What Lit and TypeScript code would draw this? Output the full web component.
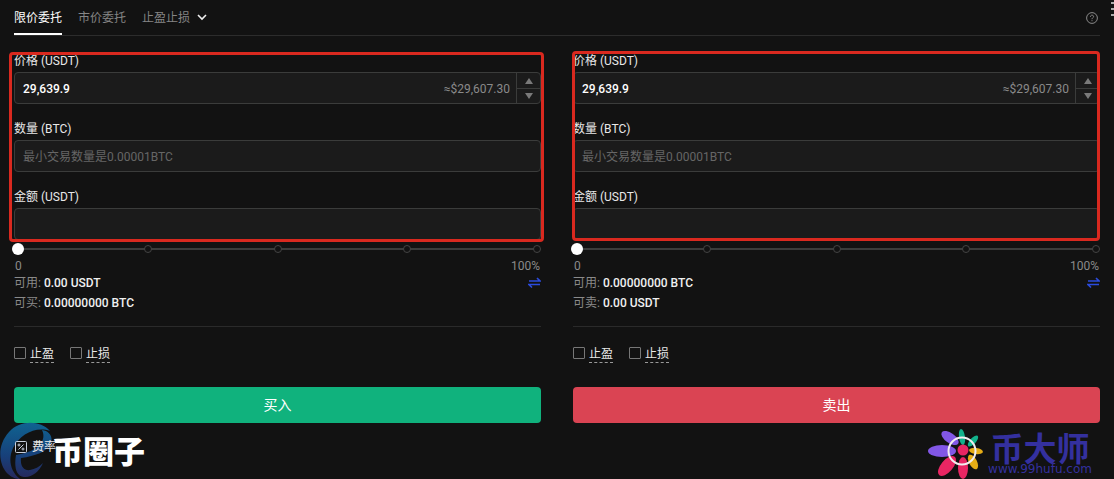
import { LitElement, html, css } from "lit";
import { customElement, property } from "lit/decorators.js";

@customElement("order-form")
class OrderForm extends LitElement {
  @property() side: "buy" | "sell" = "buy";
  @property() available = "";
  @property() reachable = "";

  static styles = css`
    :host {
      display: block;
      min-width: 0;
    }
    * {
      box-sizing: border-box;
    }
    input,
    button {
      font: inherit;
      margin: 0;
    }
    .fields {
      position: relative;
      display: flex;
      flex-direction: column;
      gap: 16px;
    }
    .frame {
      position: absolute;
      inset: 0 -3px -2px -5px;
      border: 3px solid #d9291f;
      border-radius: 4px;
      pointer-events: none;
    }
    .frame.sell {
      inset: -1px 0 -1px -1px;
    }
    .field {
      display: flex;
      flex-direction: column;
      gap: 2px;
    }
    .field label {
      line-height: 18px;
      color: #e8e8e8;
    }
    .box {
      display: flex;
      align-items: center;
      height: 32px;
      border: 1px solid #3b3c3b;
      border-radius: 4px;
      background: #1b1b1b;
      overflow: hidden;
    }
    .box input {
      flex: 1;
      min-width: 0;
      height: 30px;
      padding: 2px 8px 0;
      border: 0;
      outline: 0;
      background: transparent;
      color: #fff;
      font-weight: 500;
    }
    .box input::placeholder {
      color: #666;
      font-weight: 400;
      opacity: 1;
    }
    .approx {
      color: #8a8a8a;
      padding: 2px 6px 0 0;
    }
    .steps {
      display: grid;
      grid-template-rows: 1fr 1fr;
      width: 24px;
      height: 30px;
      border-left: 1px solid #3b3c3b;
    }
    .steps button {
      display: grid;
      place-items: center;
      padding: 0;
      border: 0;
      background: none;
    }
    .steps button + button {
      border-top: 1px solid #3b3c3b;
    }
    .steps svg {
      fill: #7a7a7a;
    }
    .slider {
      display: grid;
      align-items: center;
      height: 18px;
    }
    .track,
    .stops,
    .slider input {
      grid-area: 1 / 1;
    }
    .track {
      height: 2px;
      margin: 0 4px;
      background: #3b3c3b;
    }
    .stops {
      display: flex;
      justify-content: space-between;
    }
    .stop {
      width: 8px;
      height: 8px;
      border: 1px solid #444;
      border-radius: 50%;
      background: #121212;
    }
    .slider input {
      appearance: none;
      height: 12px;
      margin: 0 -2px;
      background: transparent;
    }
    .slider input::-webkit-slider-thumb {
      appearance: none;
      width: 12px;
      height: 12px;
      border: 0;
      border-radius: 50%;
      background: #fff;
    }
    .line {
      display: flex;
      align-items: center;
      justify-content: space-between;
      height: 20px;
      color: #8a8a8a;
    }
    .scale {
      height: 15px;
      padding: 0 1px;
    }
    .line strong {
      font-weight: 500;
      color: #f0f0f0;
    }
    .swap {
      display: grid;
      padding: 0;
      border: 0;
      background: none;
    }
    .checks {
      display: flex;
      gap: 16px;
      align-items: center;
      height: 61px;
      margin-top: 13px;
      border-top: 1px solid #2a2a2a;
      padding-bottom: 8px;
    }
    .check {
      display: flex;
      align-items: center;
      gap: 4px;
      color: #e8e8e8;
    }
    .check input {
      appearance: none;
      width: 12px;
      height: 12px;
      border: 1px solid #777;
      border-radius: 1px;
    }
    .check span {
      line-height: 16px;
      padding-top: 2px;
      border-bottom: 1px dashed #999;
    }
    .submit {
      display: block;
      width: 100%;
      height: 36px;
      border: 0;
      border-radius: 4px;
      color: #fff;
      font-size: 14px;
      background: #10b27d;
    }
    .submit.sell {
      background: #da4453;
    }
  `;

  render() {
    const sell = this.side === "sell";
    return html`
      <div class="fields">
        <div class="field">
          <label for="price">价格 (USDT)</label>
          <div class="box">
            <input id="price" value="29,639.9" />
            <span class="approx">≈$29,607.30</span>
            <div class="steps">
              <button aria-label="+"><svg width="8" height="6"><path d="M4 0 8 6H0z" /></svg></button>
              <button aria-label="-"><svg width="8" height="6"><path d="M0 0H8L4 6z" /></svg></button>
            </div>
          </div>
        </div>
        <div class="field">
          <label for="amount">数量 (BTC)</label>
          <div class="box"><input id="amount" placeholder="最小交易数量是0.00001BTC" /></div>
        </div>
        <div class="field">
          <label for="total">金额 (USDT)</label>
          <div class="box"><input id="total" /></div>
        </div>
        <div class="frame ${this.side}"></div>
      </div>
      <div class="slider">
        <div class="track"></div>
        <div class="stops">${[0, 25, 50, 75, 100].map(() => html`<span class="stop"></span>`)}</div>
        <input type="range" min="0" max="100" value="0" aria-label="%" />
      </div>
      <div class="line scale"><span>0</span><span>100%</span></div>
      <div class="line">
        <span>可用: <strong>${this.available}</strong></span>
        <button class="swap" aria-label="⇌">
          <svg width="13" height="12" viewBox="0 0 13 12" fill="none" stroke="#2b4bdc" stroke-width="1.600">
            <path d="M1 4H12L9 1M12 7.500H1L4 10.500" />
          </svg>
        </button>
      </div>
      <div class="line">
        <span>${sell ? "可卖" : "可买"}: <strong>${this.reachable}</strong></span>
      </div>
      <div class="checks">
        <label class="check"><input type="checkbox" /><span>止盈</span></label>
        <label class="check"><input type="checkbox" /><span>止损</span></label>
      </div>
      <button class="submit ${this.side}">${sell ? "卖出" : "买入"}</button>
    `;
  }
}

@customElement("app-root")
class AppRoot extends LitElement {
  static styles = css`
    :host {
      display: block;
      position: relative;
      box-sizing: border-box;
      min-height: 100vh;
      padding: 0 14px;
      overflow: hidden;
      background: #121212;
      color: #e8e8e8;
      font: 12px/16px Roboto, "Noto Sans CJK SC", sans-serif;
    }
    .tabs {
      display: flex;
      gap: 16px;
      height: 35px;
      border-bottom: 1px solid #2c2c2c;
    }
    .tab {
      display: flex;
      align-items: center;
      gap: 7px;
      padding: 2px 0 0;
      border: 0;
      border-bottom: 2px solid transparent;
      background: none;
      font: inherit;
      color: #858585;
    }
    .tab.active {
      color: #fff;
      border-color: #fff;
    }
    .help {
      display: grid;
      align-items: center;
      margin-left: auto;
      padding: 0 2px 0 0;
      border: 0;
      background: none;
    }
    .menu {
      position: absolute;
      top: 2px;
      right: 0;
    }
    .forms {
      display: grid;
      grid-template-columns: 1fr 1fr;
      gap: 32px;
      margin-top: 16px;
    }
    .fee {
      position: relative;
      display: inline-flex;
      align-items: center;
      gap: 4px;
      margin-top: 16px;
      color: #e8e8e8;
      text-decoration: none;
    }
    .mark {
      position: absolute;
      bottom: 0;
      display: flex;
      align-items: center;
      pointer-events: none;
    }
    .mark-left {
      left: 0;
      color: #fff;
      font: 900 31px/58px "Noto Sans CJK SC", sans-serif;
    }
    .mark-left svg {
      margin-right: -1px;
    }
    .mark-right {
      right: 22px;
      gap: 2px;
      color: #34309f;
    }
    .brand {
      display: flex;
      flex-direction: column;
      align-items: center;
      font: 700 33px/32px "Noto Sans CJK SC", sans-serif;
    }
    .site {
      font: 12px/13px "DejaVu Sans", sans-serif;
    }
  `;

  render() {
    return html`
      <nav class="tabs">
        <button class="tab active">限价委托</button>
        <button class="tab">市价委托</button>
        <button class="tab" aria-haspopup="menu">
          止盈止损
          <svg width="10" height="7" fill="none" stroke="#eee" stroke-width="1.600"><path d="M1 1 5 5 9 1" /></svg>
        </button>
        <button class="help" aria-label="?">
          <svg width="12" height="12" viewBox="0 0 12 12" fill="none" stroke="#8a8a8a">
            <circle cx="6" cy="6" r="5.400" />
            <path d="M4.400 4.800C4.400 2.600 7.700 2.700 7.600 4.700 7.500 5.800 6 5.800 6 7.200M6 8.200V9.200" />
          </svg>
        </button>
      </nav>
      <svg class="menu" width="3" height="14" fill="#aaa"><path d="M0 0H3V2H0zM0 6H3V8H0zM0 12H3V14H0z" /></svg>
      <main class="forms">
        <order-form side="buy" available="0.00 USDT" reachable="0.00000000 BTC"></order-form>
        <order-form side="sell" available="0.00000000 BTC" reachable="0.00 USDT"></order-form>
      </main>
      <div class="mark mark-left">
        <svg width="53" height="58" viewBox="0 0 53 58">
          <defs>
            <linearGradient id="g" gradientUnits="userSpaceOnUse" x1="0" y1="0" x2="0" y2="58">
              <stop offset="0" stop-color="#0f6592" />
              <stop offset=".6" stop-color="#17407a" />
              <stop offset="1" stop-color="#27285c" />
            </linearGradient>
          </defs>
          <path
            fill="url(#g)"
            d="M50 10C40 -1 20 -1 9 11-3 24-2 43 8 53 12 57 17 58 20 58 10 50 8 38 13 27 20 13 36 5 50 10Z"
          />
          <path
            fill="url(#g)"
            d="M42 9C50 10 54 17 50 24 45 31 36 35 21 37 20 45 24 50 30 49 35 48 39 46 43 42 39 51 31 57 24 56 16 55 14 46 16 34 30 32 41 26 43 18 44 14 43 11 42 9Z"
          />
        </svg>
        <span>币圈子</span>
      </div>
      <a class="fee" href="#">
        <svg width="14" height="14" viewBox="0 0 14 14" fill="none" stroke="#c8cfdd">
          <rect x="1.500" y="1.500" width="11" height="11" rx="1" />
          <path d="M9.500 4.500 4.500 9.500" />
          <circle cx="5" cy="5" r="1" />
          <circle cx="9" cy="9" r="1" />
        </svg>
        费率
      </a>
      <div class="mark mark-right">
        <svg width="58" height="51" viewBox="0 0 58 51">
          <ellipse cx="14" cy="23" rx="14" ry="6" fill="#8257e6" />
          <ellipse cx="22" cy="10" rx="10" ry="5" transform="rotate(35 22 10)" fill="#8257e6" />
          <ellipse cx="34" cy="9" rx="3" ry="8" transform="rotate(-8 34 9)" fill="#12b28c" />
          <ellipse cx="45" cy="13" rx="3" ry="7" transform="rotate(42 45 13)" fill="#12b28c" />
          <ellipse cx="48" cy="23" rx="7" ry="3" transform="rotate(8 48 23)" fill="#e6ad16" />
          <ellipse cx="45" cy="34" rx="4" ry="8" transform="rotate(-27 45 34)" fill="#e6ad16" />
          <ellipse cx="35" cy="40" rx="5" ry="11" fill="#e92663" />
          <ellipse cx="19" cy="38" rx="6" ry="12" transform="rotate(40 19 38)" fill="#e92663" />
          <circle cx="35" cy="22" r="5.500" fill="#e92663" />
          <circle cx="34" cy="23" r="13.500" fill="none" stroke="#f3edf0" stroke-width="2" />
        </svg>
        <div class="brand"><span>币大师</span><span class="site">www.99hufu.com</span></div>
      </div>
    `;
  }
}
